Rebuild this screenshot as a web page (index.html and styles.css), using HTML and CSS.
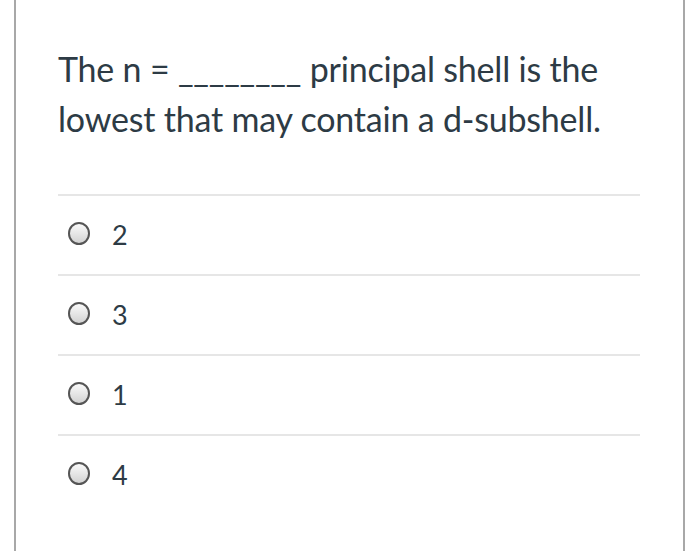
FILE: index.html
```html
<!DOCTYPE html>
<html>
<head>
<meta charset="utf-8">
<link rel="stylesheet" href="styles.css">
</head>
<body>
<div class="frame">
  <div class="question">The n = ________ principal shell is the lowest that may contain a d-subshell.</div>
  <div class="answers">
    <div class="answer"><span class="radio"></span><span class="label">2</span></div>
    <div class="answer"><span class="radio"></span><span class="label">3</span></div>
    <div class="answer"><span class="radio"></span><span class="label">1</span></div>
    <div class="answer"><span class="radio"></span><span class="label">4</span></div>
  </div>
</div>
</body>
</html>
```
FILE: styles.css
```css
html, body {
  margin: 0;
  padding: 0;
  background: #ffffff;
}
body {
  font-family: Lato, "Liberation Sans", sans-serif;
  color: #2d3b45;
}
.frame {
  margin-left: 14px;
  width: 671px;
  height: 551px;
  box-sizing: border-box;
  border-left: 2px solid #a8a8a8;
  border-right: 2px solid #a8a8a8;
  padding: 44px 43px 0 42px;
}
.question {
  font-size: 34px;
  line-height: 50px;
  margin-bottom: 50px;
  letter-spacing: -0.2px;
}
.answer {
  border-top: 2px solid #e6e6e6;
  height: 78px;
  display: flex;
  align-items: center;
  padding-left: 10px;
}
.radio {
  width: 18px;
  height: 19px;
  border: 2px solid #555555;
  border-radius: 50%;
  background: linear-gradient(#fafafa, #d2d2d2);
  margin-right: 22px;
  margin-top: -3px;
}
.label {
  font-size: 27px;
  line-height: 30px;
}
```
